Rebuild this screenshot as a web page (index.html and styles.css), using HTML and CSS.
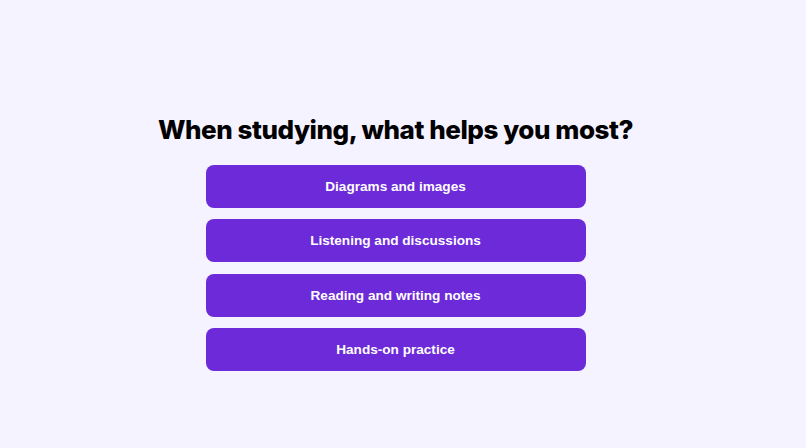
FILE: index.html
```html
<!DOCTYPE html>
<html lang="en">
<head>
<meta charset="utf-8">
<title>Quiz</title>
<link rel="stylesheet" href="styles.css">
</head>
<body>
<main class="quiz">
  <h1 class="question">When studying, what helps you most?</h1>
  <div class="options">
    <button class="option">Diagrams and images</button>
    <button class="option">Listening and discussions</button>
    <button class="option">Reading and writing notes</button>
    <button class="option">Hands-on practice</button>
  </div>
</main>
</body>
</html>
```
FILE: styles.css
```css
html, body {
  margin: 0;
  padding: 0;
  background: #f5f3ff;
}
body {
  width: 806px;
  height: 448px;
  overflow: hidden;
}
.quiz {
  display: flex;
  flex-direction: column;
  align-items: center;
  padding-top: 113px;
  padding-right: 15px;
}
.question {
  margin: 0 0 18px;
  font-family: Inter, "Liberation Sans", sans-serif;
  font-weight: 800;
  font-size: 26px;
  line-height: 34px;
  color: #000;
  letter-spacing: -0.45px;
}
.options {
  display: flex;
  flex-direction: column;
  gap: 11.4px;
  width: 380px;
}
.option {
  height: 43px;
  border: none;
  border-radius: 8px;
  background: #6d2ad9;
  color: #fff;
  font-family: "Liberation Sans", Arial, sans-serif;
  font-weight: 700;
  font-size: 13.6px;
  padding: 0;
  cursor: pointer;
}
```
